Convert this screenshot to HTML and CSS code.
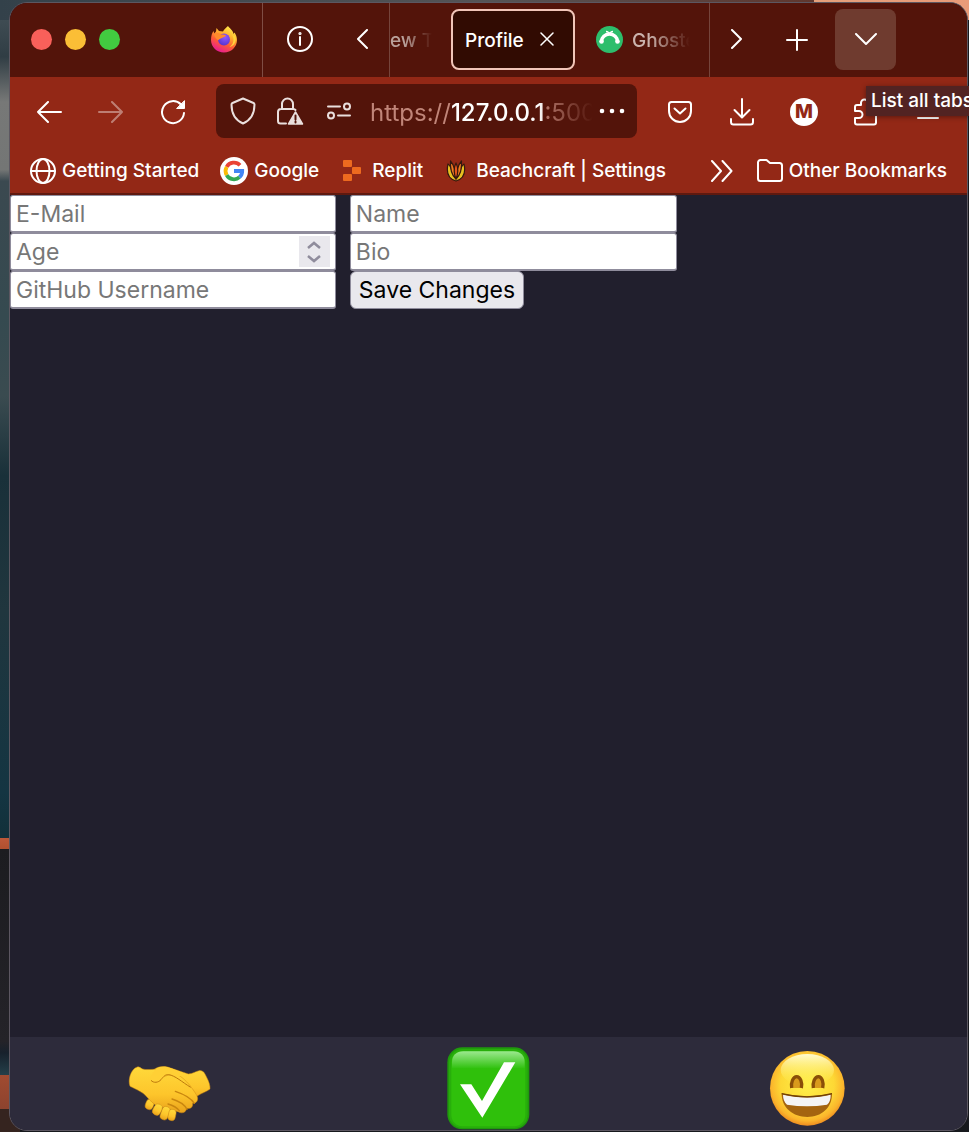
FILE: index.html
```html
<!DOCTYPE html>
<html lang="en">
<head>
<meta charset="utf-8">
<title>Profile</title>
<link rel="stylesheet" href="styles.css">
</head>
<body>
<div class="window">
  <header class="tabbar">
    <div class="lights"><span class="light red"></span><span class="light yellow"></span><span class="light green"></span></div>
    <button class="pinned" aria-label="Firefox">
      <svg width="28" height="28" viewBox="0 0 28 28">
        <defs>
          <linearGradient id="fox" x1="0.8" y1="0" x2="0.3" y2="1"><stop offset="0" stop-color="#fff44f"/><stop offset=".35" stop-color="#ffb02e"/><stop offset=".65" stop-color="#ff5a36"/><stop offset="1" stop-color="#e5169b"/></linearGradient>
          <radialGradient id="orb" cx=".6" cy=".3" r=".8"><stop offset="0" stop-color="#9059ff"/><stop offset="1" stop-color="#5130c8"/></radialGradient>
        </defs>
        <path fill="url(#fox)" d="M18 0c1 2 5 4 5.500 8l1-1.500C26 9 27 11 27 14c0 7-6 12.500-13 12.500S1 21 1 14C1 10 2 7 3.500 5l.8 2.500L6 5.500l.5-3.500L9 5l4 .5C14.500 3 16 2 18 0z"/>
        <circle cx="14" cy="13.500" r="6" fill="url(#orb)"/>
        <path fill="#ff8a2b" d="M4 8c3-1.500 5-1 7 .5 2 0 4.500 0 5 1-1 1.500-3 1.500-4 2.500-1 .5-2.500.5-3.500 2C7 14 5 12 4 8z"/>
        <path fill="#ffd43b" d="M18 2c0 4 5 5 5.500 11 .2 3-1 6-4 8 5-1 7-6 6-11-2 0-6-3-7.500-8z"/>
      </svg>
    </button>
    <button class="pinned info" aria-label="Information">
      <svg class="line" width="28" height="28" viewBox="0 0 28 28"><circle cx="14" cy="13" r="12"/><path d="M14 11v8"/><circle cx="14" cy="7.500" r=".6" fill="#fff"/></svg>
    </button>
    <button class="scroll-left" aria-label="Scroll tabs left"><svg class="line" width="14" height="22" viewBox="0 0 14 22"><path d="M11 1 2 10l9 9"/></svg></button>
    <nav class="tabs">
      <button class="tab cut"><span>ew Ta</span></button>
      <div class="tab active"><span>Profile</span><button class="close" aria-label="Close tab"><svg class="line thin" width="16" height="16" viewBox="0 0 16 16"><path d="m2 1 12 12M14 1 2 13"/></svg></button></div>
      <button class="tab ghost">
        <svg width="27" height="27" viewBox="0 0 27 27"><circle cx="13.500" cy="13.500" r="13.500" fill="#2dbe6c"/><path d="M5.500 15.500a8 7.500 0 0 1 16 0" fill="none" stroke="#fff" stroke-width="3.500"/><circle cx="5.500" cy="15.500" r="2.300" fill="#fff"/><circle cx="21.500" cy="15.500" r="2.300" fill="#fff"/><path d="M10 5.500c1.800 0 3 1 3.500 3 .5-2 1.700-3 3.500-3" fill="none" stroke="#fff" stroke-width="1.500"/></svg>
        <span class="fade">Ghostery</span>
      </button>
    </nav>
    <button class="scroll-right" aria-label="Scroll tabs right"><svg class="line" width="14" height="22" viewBox="0 0 14 22"><path d="m2 1 9 9-9 9"/></svg></button>
    <button class="new-tab" aria-label="New tab"><svg class="line" width="22" height="22" viewBox="0 0 22 22"><path d="M11 1v20M1 11h20"/></svg></button>
    <button class="list-tabs" aria-label="List all tabs"><svg class="line" width="22" height="14" viewBox="0 0 22 14"><path d="m1 1 10 10L21 1"/></svg></button>
  </header>

  <div class="toolbar">
    <button class="tool" aria-label="Back"><svg class="line" width="26" height="22" viewBox="0 0 26 22"><path d="M25 11H2M12 1 2 11l10 10"/></svg></button>
    <button class="tool" aria-label="Forward" disabled><svg class="line" width="26" height="22" viewBox="0 0 26 22"><path d="M1 11h23M14 1l10 10-10 10"/></svg></button>
    <button class="tool" aria-label="Reload"><svg class="line" width="26" height="26" viewBox="0 0 26 26"><path d="M21 5.500A11 11 0 1 0 24 14"/><path d="M24.500 2v7.500H17z" fill="#fff" stroke-width="1"/></svg></button>
    <div class="urlbar">
      <svg class="line soft shield" width="26" height="28" viewBox="0 0 26 28"><path d="M13 1.500 2.500 6c-.6.300-1 .8-1 1.500C1.500 16 5 23 13 26.500 21 23 24.500 16 24.500 7.500c0-.7-.4-1.200-1-1.500z"/></svg>
      <svg class="line soft lock" width="28" height="28" viewBox="0 0 28 28"><path d="M6 12V7a5.500 5.500 0 0 1 11 0v5M10 26.500H4.500a2.500 2.500 0 0 1-2.500-2.500V15a3 3 0 0 1 3-3h12.500a3 3 0 0 1 2 1"/><path d="m19.500 15 7 12h-14z" fill="#eadfdd" stroke-width="1.500"/><path d="M19.500 18.500v4M19.500 24.500v1" stroke="#53140a"/></svg>
      <svg class="line soft perms" width="26" height="18" viewBox="0 0 26 18"><path d="M2 4.500h12M12 13.500h12"/><circle cx="21" cy="4.500" r="3"/><circle cx="5" cy="13.500" r="3"/></svg>
      <div class="url">https://<b>127.0.0.1</b>:5000</div>
      <button class="more" aria-label="Page actions"><svg width="26" height="6" viewBox="0 0 26 6" fill="#fff"><circle cx="3" cy="3" r="2.300"/><circle cx="13" cy="3" r="2.300"/><circle cx="23" cy="3" r="2.300"/></svg></button>
    </div>
    <button class="tool" aria-label="Pocket"><svg class="line" width="26" height="24" viewBox="0 0 26 24"><path d="M4.500 2h17A2.500 2.500 0 0 1 24 4.500V11a11 11 0 0 1-22 0V4.500A2.500 2.500 0 0 1 4.500 2z"/><path d="m7.500 8.500 5.500 5 5.500-5"/></svg></button>
    <button class="tool" aria-label="Downloads"><svg class="line" width="26" height="28" viewBox="0 0 26 28"><path d="M13 1v18M5.500 12l7.500 7.500 7.500-7.500M2 21v3a2.500 2.500 0 0 0 2.500 2.500h17A2.500 2.500 0 0 0 24 24v-3"/></svg></button>
    <button class="tool" aria-label="Account"><span class="badge">M</span></button>
    <button class="tool" aria-label="Extensions"><svg class="line" width="26" height="28" viewBox="0 0 26 28"><path d="M8 7V5a3.500 3.500 0 0 1 7 0v2h6a2 2 0 0 1 2 2v15.500a2 2 0 0 1-2 2H4a2 2 0 0 1-2-2V20h4a3.500 3.500 0 0 0 0-7H2V9a2 2 0 0 1 2-2z"/></svg></button>
    <button class="tool" aria-label="Menu"><svg class="line" width="22" height="18" viewBox="0 0 22 18"><path d="M1 2h20M1 9h20M1 15h20"/></svg></button>
  </div>

  <nav class="bookmarks">
    <a href="#" class="bm globe"><svg class="line" width="26" height="26" viewBox="0 0 26 26"><circle cx="13" cy="13" r="12"/><ellipse cx="13" cy="13" rx="6.500" ry="12"/><path d="M1 13h24"/></svg>Getting Started</a>
    <a href="#" class="bm google"><svg width="28" height="28" viewBox="0 0 28 28" fill="none" stroke-width="3.800"><circle cx="14" cy="14" r="14" fill="#fff"/><path stroke="#ea4335" d="M6.700 9.900A8.300 8.300 0 0 1 20 8.300"/><path stroke="#fbbc05" d="M6.700 18.100a8.300 8.300 0 0 1 0-8.200"/><path stroke="#34a853" d="M19.500 20.200a8.300 8.300 0 0 1-12.800-2.100"/><path stroke="#4285f4" d="M14 14h8.200a8.300 8.300 0 0 1-2.700 6.200"/></svg>Google</a>
    <a href="#" class="bm replit"><svg width="19" height="22" viewBox="0 0 19 22" fill="#ed6a1f"><rect x="0" y="0" width="9" height="7" rx="1"/><rect x="9" y="7" width="9" height="7" rx="1"/><rect x="0" y="14" width="9" height="7" rx="1"/></svg>Replit</a>
    <a href="#" class="bm beach"><svg width="20" height="22" viewBox="0 0 20 22" stroke="#35190f" stroke-width="1.200" stroke-linejoin="round"><path fill="#e8c020" d="M2 4c-2 9 1 15 8 17 7-2 10-8 8-17-2 1-3 4-4 7l-4 8-4-8C5 8 4 5 2 4z"/><path fill="#f07b20" d="M4.500 1C4 9 5 14 9.500 18.500 9.500 11 8 5 4.500 1zM15.500 1c.5 8-.5 13-5 17.500 0-7.500 1.500-13.500 5-17.500z"/><path fill="#e5551c" d="M10 3C7.500 8 8 14 10 19c2-5 2.500-11 0-16z"/></svg>Beachcraft | Settings</a>
    <button class="overflow" aria-label="More bookmarks"><svg class="line" width="24" height="22" viewBox="0 0 24 22"><path d="m2 1 9 10-9 10M12.500 1l9 10-9 10"/></svg></button>
    <a href="#" class="bm folder"><svg class="line" width="26" height="24" viewBox="0 0 26 24"><path d="M1 19.500v-16A2.500 2.500 0 0 1 3.500 1h6L13 4h9.500A2.500 2.500 0 0 1 25 6.500v13a2.500 2.500 0 0 1-2.500 2.500h-19A2.500 2.500 0 0 1 1 19.500z"/></svg>Other Bookmarks</a>
  </nav>

  <main class="page">
    <form class="profile">
      <input type="email" placeholder="E-Mail" aria-label="E-Mail">
      <input type="text" placeholder="Name" aria-label="Name">
      <div class="number">
        <input type="number" placeholder="Age" aria-label="Age">
        <span class="spinner"><svg width="16" height="24" viewBox="0 0 16 24" fill="none" stroke="#8f8c9c" stroke-width="2.500"><path d="m2 8 6-5 6 5M2 16l6 5 6-5"/></svg></span>
      </div>
      <input type="text" placeholder="Bio" aria-label="Bio">
      <input type="text" placeholder="GitHub Username" aria-label="GitHub Username">
      <button type="button" class="save">Save Changes</button>
    </form>
  </main>

  <footer class="dock">
    <button aria-label="Connect">
      <svg width="83" height="83" viewBox="51 51 249 249">
        <defs><linearGradient id="skin" x1="0" y1="0" x2="0" y2="1"><stop offset="0" stop-color="#ffd93b"/><stop offset=".6" stop-color="#fdc52b"/><stop offset="1" stop-color="#e9a21b"/></linearGradient></defs>
        <g fill="url(#skin)" stroke="#d18a12" stroke-width="1.500">
          <rect x="104" y="207" width="24" height="32" rx="12" transform="rotate(20 116 223)"/>
          <path d="M122 125c12-14 30-18 48-14l62 21c14-1 22-8 32-10 14-2 18 10 24 22 5 10 10 22 9 33-10 8-24 12-37 20l-38 20-80-40z"/>
          <path d="M79 111c6-2 10 4 16 6 12 4 26 0 42 1l20 22 34-10c24 8 50 38 66 66 8 14-2 26-12 23 2 14-10 20-19 15 1 12-12 19-25 11l-60-17c-16-6-22-16-34-28-14-15-28-20-50-31-8-20 4-54 22-58z"/>
          <rect x="127" y="221" width="25" height="35" rx="12" transform="rotate(28 139 238)"/>
          <rect x="150" y="229" width="24" height="41" rx="12" transform="rotate(20 162 250)"/>
          <rect x="172" y="238" width="22" height="34" rx="11" transform="rotate(12 183 255)"/>
        </g>
        <path d="M120 151c-4-8 2-18 9-27 8-12 20-15 37-13 26 5 50 20 68 24l-42 5c-10-6-20-9-28-4-8 6-13 17-25 20-8 2-14 0-19-5z" fill="#ffd035"/>
        <path d="M120 151c8 9 22 7 30-2 8-10 13-16 23-15 20 3 40 22 66 38" fill="none" stroke="#bc780d" stroke-width="3"/>
        <path d="M193 184c24 8 46 18 57 36M183 207c20 6 38 17 45 31M171 222c14 4 26 10 34 20" fill="none" stroke="#c9860f" stroke-width="4" stroke-linecap="round"/>
      </svg>
    </button>
    <button aria-label="Confirm">
      <svg width="83" height="83" viewBox="51 51 249 249">
        <defs><linearGradient id="shine" x1="0" y1="0" x2="0" y2="1"><stop offset="0" stop-color="#9be88e"/><stop offset="1" stop-color="#31c210"/></linearGradient></defs>
        <rect x="52" y="52" width="246" height="246" rx="45" fill="#1f9a0c"/>
        <rect x="57" y="57" width="236" height="237" rx="40" fill="#28ae0b"/>
        <rect x="64" y="63" width="222" height="226" rx="34" fill="#2fc00b"/>
        <path d="M66 115V97c0-21 13-33 34-33h150c21 0 34 12 34 33v18z" fill="url(#shine)"/>
        <path d="M90 163h34l32 50 66-116h34L157 263z" fill="#fff"/>
      </svg>
    </button>
    <button aria-label="Mood">
      <svg width="83" height="83" viewBox="51 51 249 249">
        <defs>
          <radialGradient id="face" cx=".5" cy=".45" r=".55"><stop offset="0" stop-color="#fff04a"/><stop offset=".65" stop-color="#fdd835"/><stop offset=".88" stop-color="#fbb52c"/><stop offset="1" stop-color="#ee8c20"/></radialGradient>
          <linearGradient id="glow" x1="0" y1="0" x2="0" y2="1"><stop offset="0" stop-color="#fffbd0"/><stop offset="1" stop-color="#fff04a" stop-opacity="0"/></linearGradient>
        </defs>
        <circle cx="175" cy="175" r="112" fill="url(#face)"/>
        <ellipse cx="175" cy="120" rx="80" ry="48" fill="url(#glow)"/>
        <path d="M128 174c-3-16 4-34 15-34s18 18 14 34M193 174c-3-16 4-34 15-34s17 18 13 34" fill="#d99a1c" stroke="#8a4f08" stroke-width="10"/>
        <path d="M98 190c48 12 104 12 151 0 1 44-32 71-74 71s-78-27-77-71z" fill="#a46410"/>
        <path d="M102 194c48 11 98 11 143 0 0 14-3 24-11 30-40 6-80 6-120 0-8-8-12-18-12-30z" fill="#f4f4f5"/>
        <path d="M98 191c48 12 104 12 151 0" fill="none" stroke="#704006" stroke-width="4"/>
      </svg>
    </button>
  </footer>
</div>
<div class="tooltip" role="tooltip">List all tabs</div>
</body>
</html>
```
FILE: styles.css
```css
* { box-sizing: border-box; }
body {
  margin: 0;
  min-height: 100vh;
  padding: 2px 1px 1px 9px;
  display: flex;
  position: relative;
  overflow: hidden;
  font-family: Inter, "Liberation Sans", sans-serif;
  font-size: 19px;
  font-weight: 500;
  color: #fff;
  background:
    linear-gradient(90deg, #33414a 0%, #555456 50%, #60372e 84%, #e5a07c 84%, #e99b79 100%) 0 0 / 100% 20px no-repeat,
    linear-gradient(#47545b 0%, #303d44 5%, #777877 9%, #747675 15%, #3b4950 16%, #354a50 28%, #3a4b50 35%, #193039 42%, #20363e 54%, #143542 70%, #12303a 74%, #bd5839 74%, #b0502f 75%, #1c1c20 75%, #242328 92%, #17212c 93%, #24404a 95%, #a04b31 95%, #8d432e 98%, #35241f 98%) 0 0 / 20px 100% no-repeat,
    #17191d;
}
button { border: 0; padding: 0; margin: 0; background: none; color: inherit; font: inherit; display: flex; align-items: center; justify-content: center; }
svg { display: block; flex: none; }
.line { fill: none; stroke: #fff; stroke-width: 2; stroke-linecap: round; stroke-linejoin: round; }
.thin { stroke-width: 1.500; }
.soft { stroke: #eadfdd; }
.window {
  flex: 1;
  min-width: 0;
  display: flex;
  flex-direction: column;
  border: 1px solid #5c5761;
  border-radius: 18px;
  overflow: hidden;
  background: #211f2d;
}
.tabbar { display: flex; align-items: stretch; height: 74px; background: #53140a; flex: none; }
.lights { display: flex; gap: 13px; align-items: center; padding-left: 21px; margin-right: 66px; padding-bottom: 2px; }
.light { width: 21px; height: 21px; border-radius: 50%; }
.red { background: #f9605a; }
.yellow { background: #fbbe36; }
.green { background: #42cb40; }
.pinned { width: 77px; border-right: 1px solid #7f4d44; }
.info { width: 74px; border: 0; }
.scroll-left { width: 53px; border-right: 1px solid #75443b; }
.scroll-right { width: 54px; border-left: 1px solid #75443b; }
.new-tab { width: 68px; }
.list-tabs { width: 61px; margin: 6px 71px 7px 4px; border-radius: 8px; background: #6f3b2f; }
.tabs { flex: 1; min-width: 0; display: flex; align-items: flex-start; padding-top: 6px; overflow: hidden; }
.tab { display: flex; align-items: center; flex: none; height: 61px; padding-top: 2px; white-space: nowrap; }
.cut { width: 61px; justify-content: flex-start; color: #b9a09a; }
.cut span { width: 42px; overflow: hidden; text-align: left; -webkit-mask-image: linear-gradient(90deg, #000 35%, transparent); mask-image: linear-gradient(90deg, #000 35%, transparent); }
.active { width: 124px; border: 2px solid #f1c5b8; border-radius: 8px; background: #310b02; padding: 1px 18px 0 12px; justify-content: space-between; }
.ghost { margin-left: 21px; gap: 9px; color: #cbb3ad; }
.ghost svg { margin-bottom: 2px; }
.fade { width: 58px; overflow: hidden; text-align: left; -webkit-mask-image: linear-gradient(90deg, #000 30%, transparent); mask-image: linear-gradient(90deg, #000 30%, transparent); }
.toolbar { display: flex; align-items: center; height: 70px; padding: 0 8px; background: #932816; flex: none; }
.tool { width: 62px; height: 60px; flex: none; }
.tool:disabled { opacity: .4; }
.urlbar { flex: 1; min-width: 0; height: 54px; margin: 0 12px 2px; padding: 0 12px 0 14px; display: flex; align-items: center; background: #53140a; border-radius: 8px; }
.lock { margin-left: 20px; }
.perms { margin-left: 22px; }
.url { flex: 1; min-width: 0; margin: 2px 6px 0 18px; overflow: hidden; white-space: nowrap; font-size: 24px; font-weight: 400; color: #c08579; -webkit-mask-image: linear-gradient(90deg, #000 75%, transparent); mask-image: linear-gradient(90deg, #000 75%, transparent); }
.url b { font-weight: 500; color: #fff; }
.badge { width: 28px; height: 28px; border-radius: 50%; background: #fff; color: #932816; font-size: 19px; font-weight: 800; line-height: 28px; }
.tooltip { position: absolute; left: calc(100% - 103px); top: 86px; padding: 0 0 0 5px; line-height: 30px; white-space: nowrap; background: #522322; box-shadow: 0 1px 5px #0006; }
.bookmarks { display: flex; align-items: center; height: 48px; padding: 1px 20px 0 20px; background: #932816; border-bottom: 2px solid #5f190f; flex: none; white-space: nowrap; }
.bm { display: flex; align-items: center; gap: 6px; color: #fff; text-decoration: none; }
.google { margin-left: 21px; }
.replit { margin-left: 24px; gap: 10px; }
.beach { margin-left: 23px; gap: 10px; }
.overflow { margin-left: auto; }
.folder { margin-left: 23px; }
.page { flex: 1; }
.profile { display: grid; grid-template-columns: 34.7% 34.8%; column-gap: 14px; width: calc(100% - 18px); }
.profile input, .save { height: 38px; font-family: inherit; font-size: 23px; font-weight: 400; }
.profile input { width: 100%; min-width: 0; margin: 0; padding: 0 5px; border: 1px solid #8f8c9c; border-bottom-width: 2px; border-radius: 3px; background: #fff; color: #111; display: block; appearance: none; }
.profile input::placeholder { color: #777; opacity: 1; }
.profile input[type="number"] { appearance: textfield; -moz-appearance: textfield; }
.profile input::-webkit-inner-spin-button { display: none; }
.number { position: relative; }
.spinner { position: absolute; right: 6px; top: 3px; width: 31px; height: 31px; background: #e9e8ed; display: flex; align-items: center; justify-content: center; }
.save { justify-self: start; padding: 0 8px; border: 1px solid #8f8c9c; border-radius: 6px; background: #e9e8ed; color: #000; }
.dock { display: grid; grid-template-columns: repeat(3, 1fr); height: 93px; padding-top: 10px; background: #2d2b3b; flex: none; }
.dock button { justify-self: center; align-self: start; }
```
